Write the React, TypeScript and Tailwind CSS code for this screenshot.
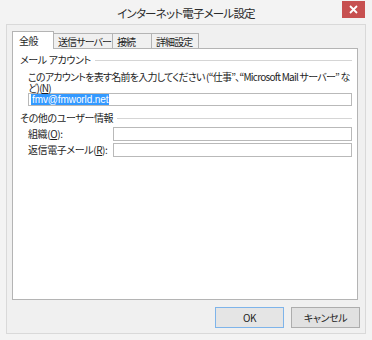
import React from 'react';

const jp = "[font-family:'Noto_Sans_CJK_JP','Noto_Sans',sans-serif] [font-feature-settings:'palt']";

const Tab = ({ label, width, selected }: { label: string; width: string; selected?: boolean }) =>
  selected ? (
    <div className={`relative z-10 -mb-px flex h-[18px] ${width} items-start whitespace-nowrap border border-b-0 border-[#b4b4b4] bg-white pl-[6px] pt-[3px] leading-[12px]`}>
      {label}
    </div>
  ) : (
    <div className={`-ml-px flex h-[15px] ${width} items-start whitespace-nowrap border border-b-0 border-[#b4b4b4] bg-[#f0f0f0] pl-[4px] pt-[2px] leading-[12px] tracking-[-0.9px]`}>
      {label}
    </div>
  );

const GroupHeader = ({ label }: { label: string }) => (
  <div className="flex h-[12px] items-center pl-[7px] leading-[12px]">
    <span className="whitespace-nowrap">{label}</span>
    <div className="ml-[4px] h-px flex-1 bg-[#d5d5d5]" />
  </div>
);

const Field = ({ label, mnemonic, className }: { label: string; mnemonic: string; className?: string }) => (
  <div className={`flex h-[14px] items-center pl-[15px] ${className ?? ''}`}>
    <span className="w-[85px] whitespace-nowrap leading-[12px]">
      {label}(<span className="underline">{mnemonic}</span>):
    </span>
    <div className="h-[14px] flex-1 border border-[#b9b9b9] bg-white" />
  </div>
);

const App = () => {
  return (
    <div className={`h-[340px] w-[372px] overflow-hidden bg-[#f3f3f3] text-[10px] tracking-[-0.4px] text-[#1e1e1e] ${jp}`}>
      {/* Title bar */}
      <div className="relative flex h-[24px] justify-center pt-[6px]">
        <span className="text-[11.5px] leading-[15px] tracking-[-0.8px] text-[#2b2b2b]">インターネット電子メール設定</span>
        <div className="absolute left-[342px] top-[1px] flex h-[17px] w-[23px] items-center justify-center bg-[#c75050]">
          <svg width="9" height="9" viewBox="0 0 9 9">
            <path d="M1 1 L8 8 M8 1 L1 8" stroke="#fff" strokeWidth="1.8" />
          </svg>
        </div>
      </div>

      {/* Client area */}
      <div className="mx-[6px] flex h-[310px] flex-col border border-[#d9d9d9] bg-[#f0f0f0] pl-[5px] pr-[7px] pt-[6px] pb-[5px]">
        {/* Tabs */}
        <div className="flex h-[17px] items-end">
          <Tab label="全般" width="w-[42px]" selected />
          <Tab label="送信サーバー" width="w-[60px]" />
          <Tab label="接続" width="w-[40px]" />
          <Tab label="詳細設定" width="w-[48px]" />
        </div>

        {/* Panel */}
        <div className="h-[252px] w-[346px] border border-[#b4b4b4] bg-white pr-[5px] pt-[5px]">
          <GroupHeader label="メール アカウント" />
          <div className="mt-[5px] pl-[15px] leading-[11px] whitespace-nowrap tracking-[-0.75px]">
            <div>このアカウントを表す名前を入力してください (“仕事”、“Microsoft Mail サーバー” な</div>
            <div>
              ど)(<span className="underline">N</span>)
            </div>
          </div>
          <div className="ml-[15px] flex h-[13px] items-center border border-[#b9b9b9] bg-white pl-[2px]">
            <span className="bg-[#3399ff] px-px text-[10px] leading-[11px] tracking-[-0.1px] text-white [font-family:'Liberation_Sans',sans-serif]">
              fmv@fmworld.net
            </span>
          </div>

          <div className="mt-[6px]">
            <GroupHeader label="その他のユーザー情報" />
          </div>
          <Field label="組織" mnemonic="O" className="mt-[3px]" />
          <Field label="返信電子メール" mnemonic="R" className="mt-[2px]" />
        </div>

        {/* Buttons */}
        <div className="-mr-[2px] mt-[7px] flex justify-end gap-[7px]">
          <button className="h-[21px] w-[69px] border border-[#7eb4ea] bg-[#e5e5e5] text-[10px] leading-[12px]">OK</button>
          <button className="h-[21px] w-[69px] border border-[#adadad] bg-[#e1e1e1] text-[10px] leading-[12px]">キャンセル</button>
        </div>
      </div>
    </div>
  );
};

export default App;
